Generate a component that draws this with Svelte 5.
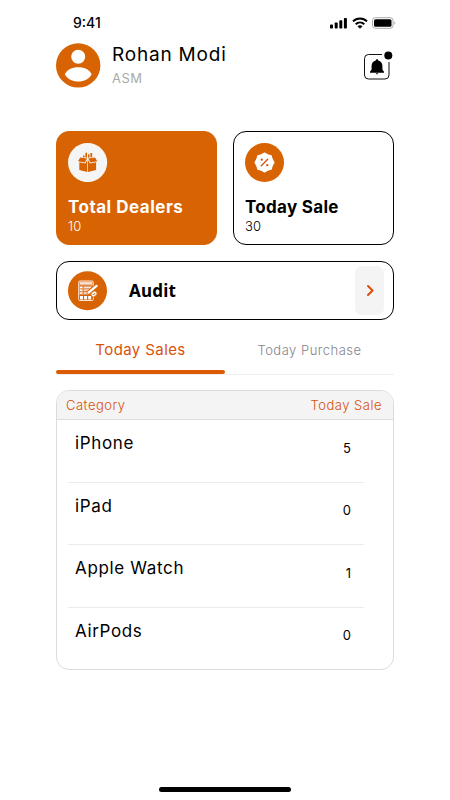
<script lang="ts">
	type Tab = 'sales' | 'purchase';

	let activeTab = $state<Tab>('sales');

	const rows = [
		{ name: 'iPhone', count: 5 },
		{ name: 'iPad', count: 0 },
		{ name: 'Apple Watch', count: 1 },
		{ name: 'AirPods', count: 0 }
	];
</script>

<div class="screen">
	<div class="status-bar">
		<span class="time">9:41</span>
		<div class="status-icons">
			<svg width="18" height="12" viewBox="0 0 18 12">
				<rect x="0" y="7.5" width="3" height="4" rx="0.8" />
				<rect x="4.7" y="5.5" width="3" height="6" rx="0.8" />
				<rect x="9.3" y="3.2" width="3" height="8.3" rx="0.8" />
				<rect x="13.9" y="1" width="3" height="10.5" rx="0.8" />
			</svg>
			<svg width="16" height="12" viewBox="0 0 16 12">
				<g fill="none" stroke="#000" stroke-width="2">
					<path d="M1 4.4C5 0.4 11 0.4 15 4.4" />
					<path d="M3.7 7.2C6.2 4.9 9.8 4.9 12.3 7.2" />
				</g>
				<path d="M5.5 9.2Q8 7.3 10.5 9.2L8 11.7Z" />
			</svg>
			<svg width="24" height="12" viewBox="0 0 24 12">
				<rect x="0.5" y="0.7" width="20.5" height="10.6" rx="2.8" fill="none" stroke="#aaa" />
				<rect x="2" y="2.2" width="17.5" height="7.6" rx="1.5" />
				<path d="M22.3 4.2Q24.5 6 22.3 7.8Z" fill="#aaa" />
			</svg>
		</div>
	</div>

	<header class="profile">
		<svg width="45" height="45" viewBox="0 0 45 45">
			<circle cx="22.2" cy="22.4" r="22.2" fill="#d86303" />
			<circle cx="22.2" cy="13.8" r="7" fill="#fff" />
			<path d="M8.8 31.2C11 26.7 16 24.2 22.3 24.2S33.5 26.7 35.7 31.2C33 36 28 38.5 22.3 38.5S11.5 36 8.8 31.2Z" fill="#fff" />
		</svg>
		<div class="who">
			<h1>Rohan Modi</h1>
			<span class="role">ASM</span>
		</div>
		<button class="bell" aria-label="Notifications">
			<svg width="30" height="30" viewBox="0 0 30 30">
				<path d="M18 4.5H4.5A4 4 0 0 0 .5 8.5V25A4 4 0 0 0 4.5 29H21A4 4 0 0 0 25 25V12" fill="none" stroke="#111" />
				<circle cx="24.3" cy="5.5" r="4" />
				<path d="M13 9.3C13.8 9.3 14.1 9.8 14.2 10.5C17 11.2 18.4 13.3 18.4 16V19.5L20 21.8V22.7H6V21.8L7.6 19.5V16C7.6 13.3 9 11.2 11.8 10.5C11.9 9.8 12.2 9.3 13 9.3Z" />
				<path d="M11.7 23.3H14.3Q13 25.5 11.7 23.3Z" />
			</svg>
		</button>
	</header>

	<div class="cards">
		<div class="card filled">
			<svg width="40" height="40" viewBox="0 0 40 40">
				<circle cx="19.6" cy="20.5" r="19.6" fill="#f5f5f5" />
				<g fill="#d86303">
					<path d="M12.2 15.6L19 16.6L16.8 20.6L10 19.2Z" />
					<path d="M27 15.6L20.3 16.6L22.5 20.6L29.3 19.2Z" />
					<path d="M11.3 20.2L17.3 21.5L19.3 18V30L11.3 28Z" />
					<path d="M28.1 20.2L22 21.5L20 18V30L28.1 28Z" />
					<path d="M15 13.5H16.6V15.5L15 15.2ZM17.4 11L19 10.6V15.8L17.4 15.5ZM20 12.5L21.5 12V15.5L20 15.8ZM22.4 11H24.2V15.2L22.4 15.5Z" />
				</g>
			</svg>
			<h2>Total Dealers</h2>
			<span class="value">10</span>
		</div>
		<div class="card sale">
			<svg width="40" height="40" viewBox="0 0 40 40">
				<circle cx="19.5" cy="20.5" r="19.5" fill="#d86303" />
				<path d="M19.5 11L22.6 12.8L26.2 13.8L27.2 17.4L29 20.5L27.2 23.6L26.2 27.2L22.6 28.2L19.5 30L16.4 28.2L12.8 27.2L11.8 23.6L10 20.5L11.8 17.4L12.8 13.8L16.4 12.8Z" fill="#fff" stroke="#fff" stroke-width="1.2" stroke-linejoin="round" />
				<path d="M16.3 23.7L22.7 17.3" stroke="#d84b03" stroke-width="1.3" stroke-linecap="round" />
				<circle cx="16.8" cy="17.7" r="1.1" fill="#d84b03" />
				<circle cx="22.3" cy="23.2" r="1.1" fill="#d84b03" />
			</svg>
			<h2>Today Sale</h2>
			<span class="value">30</span>
		</div>
	</div>

	<button class="audit">
		<svg width="40" height="40" viewBox="0 0 40 40">
			<circle cx="19.5" cy="19.8" r="19.5" fill="#d86303" />
			<rect x="10.7" y="10" width="14.6" height="19.5" rx="1.3" fill="#e38b48" stroke="#fbe4d5" />
			<rect x="12" y="11.2" width="12" height="2.3" fill="#fbe4d5" />
			<path d="M12 16.5H14.5M12 19.2H14.5M12 22H14.5" stroke="#fff" stroke-width="1.6" />
			<path d="M16 16.5H23M16 19.2H21M16 22H19" stroke="#fbe4d5" stroke-width="1.3" />
			<path d="M11.2 24H24.8V29H11.2Z" fill="#d86303" />
			<path d="M12 25H15V28.4H12ZM16.1 25H19.1V28.4H16.1ZM20.2 25H23.2V28.4H20.2Z" fill="#fff" />
			<path d="M19.5 22.5L29 14.3" stroke="#d86303" stroke-width="4" />
			<path d="M20.5 21.7L28.6 14.8" stroke="#fff" stroke-width="2.2" stroke-linecap="round" />
			<ellipse cx="26" cy="23" rx="3.3" ry="2.5" transform="rotate(-40 26 23)" fill="#fff" stroke="#d86303" stroke-width="0.7" />
			<path d="M24.7 23L25.7 24L27.2 22" fill="none" stroke="#d86303" stroke-width="0.9" />
		</svg>
		<span class="audit-label">Audit</span>
		<span class="chevron">
			<svg width="10" height="12" viewBox="0 0 10 12">
				<path d="M3 1L7.5 5.5L3 10" fill="none" stroke="#dc4a08" stroke-width="1.9" stroke-linecap="round" stroke-linejoin="round" />
			</svg>
		</span>
	</button>

	<div class="tabs">
		<button class:active={activeTab === 'sales'} onclick={() => (activeTab = 'sales')}>
			<span>Today Sales</span>
		</button>
		<button class:active={activeTab === 'purchase'} onclick={() => (activeTab = 'purchase')}>
			<span>Today Purchase</span>
		</button>
	</div>

	<section class="table">
		<div class="table-head">
			<span>Category</span>
			<span>Today Sale</span>
		</div>
		<div class="table-body">
			{#each rows as row}
				<div class="row">
					<span class="name">{row.name}</span>
					<span class="count">{row.count}</span>
				</div>
			{/each}
		</div>
	</section>

	<div class="home-indicator"></div>
</div>

<style>
	:global(body) {
		margin: 0;
		background: #fff;
	}

	.screen {
		display: flex;
		flex-direction: column;
		box-sizing: border-box;
		width: 450px;
		height: 800px;
		padding: 0 56px 8px;
		font-family: Inter, 'Liberation Sans', sans-serif;
		color: #000;
		overflow: hidden;
	}

	svg {
		display: block;
		flex: none;
	}

	button {
		padding: 0;
		border: none;
		background: none;
		font-family: inherit;
		color: inherit;
		cursor: pointer;
	}

	h1,
	h2 {
		margin: 0;
	}

	.status-bar {
		display: flex;
		justify-content: space-between;
		align-items: center;
		height: 17px;
		padding: 14px 0 0 17px;
		margin-right: -2px;
	}

	.time {
		font-size: 14px;
		font-weight: 500;
	}

	.status-icons {
		display: flex;
		gap: 4px;
	}

	.profile {
		display: flex;
		height: 44px;
		margin-top: 12px;
	}

	.who {
		display: flex;
		flex-direction: column;
		margin-left: 11px;
	}

	h1 {
		font-size: 19px;
		line-height: 23px;
		font-weight: 400;
		letter-spacing: 0.8px;
	}

	.role {
		margin-top: 3px;
		font-size: 13px;
		line-height: 18px;
		letter-spacing: 0.5px;
		color: #aaa;
	}

	.bell {
		align-self: flex-start;
		margin: 7px 0 0 auto;
	}

	.cards {
		display: grid;
		grid-template-columns: 1fr 1fr;
		gap: 16px;
		margin-top: 44px;
	}

	.card {
		box-sizing: border-box;
		height: 114px;
		padding: 10px 11px;
		border: 1px solid #000;
		border-radius: 13px;
	}

	.card.filled {
		border-color: #d86303;
		background: #d86303;
		color: #fff;
	}

	h2 {
		margin-top: 14px;
		font-size: 17px;
		line-height: 22px;
		font-weight: 700;
		letter-spacing: 0.5px;
	}

	.sale h2 {
		letter-spacing: 0.3px;
	}

	.value {
		display: block;
		font-size: 13px;
		line-height: 17px;
		font-weight: 300;
		letter-spacing: 0.2px;
	}

	.audit {
		display: flex;
		align-items: center;
		box-sizing: border-box;
		height: 59px;
		flex: none;
		margin-top: 16px;
		padding: 0 9px 0 11px;
		border: 1px solid #000;
		border-radius: 13px;
	}

	.audit-label {
		margin-left: 21px;
		font-family: 'Noto Sans', sans-serif;
		font-size: 17px;
		font-weight: 700;
		letter-spacing: 0.2px;
	}

	.chevron {
		display: flex;
		align-items: center;
		justify-content: center;
		width: 29px;
		height: 49px;
		margin-left: auto;
		border-radius: 7px;
		background: #f4f4f4;
	}

	.tabs {
		display: grid;
		grid-template-columns: 1fr 1fr;
		height: 55px;
		flex: none;
	}

	.tabs button {
		display: flex;
		flex-direction: column;
		align-items: center;
		position: relative;
		padding-top: 19px;
		border-bottom: 1px solid #eee;
		font-size: 13px;
		line-height: 22px;
		font-weight: 300;
		letter-spacing: 0.5px;
		color: #85858b;
	}

	.tabs button.active {
		font-size: 15px;
		font-weight: 400;
		letter-spacing: 0.4px;
		color: #d85309;
	}

	.tabs button.active::after {
		content: '';
		position: absolute;
		inset: auto 0 0;
		height: 4px;
		border-radius: 2px;
		background: #db5c05;
	}

	.table {
		box-sizing: border-box;
		height: 280px;
		flex: none;
		margin-top: 15px;
		border: 1px solid #dcdcdc;
		border-radius: 13px;
		overflow: hidden;
	}

	.table-head {
		display: flex;
		justify-content: space-between;
		align-items: center;
		height: 28px;
		padding: 0 11px 0 9px;
		border-bottom: 1px solid #dcdcdc;
		background: #f4f4f4;
		font-size: 13px;
		font-weight: 300;
		letter-spacing: 0.5px;
		color: #d8500b;
	}

	.table-body {
		padding: 0 29px 0 11px;
	}

	.row {
		display: flex;
		justify-content: space-between;
		box-sizing: border-box;
		height: 62.6px;
		padding: 11px 13px 0 7px;
		border-bottom: 1px solid #ebebeb;
	}

	.row:last-child {
		border-bottom: none;
	}

	.name {
		font-size: 17px;
		line-height: 24px;
		letter-spacing: 0.65px;
	}

	.count {
		margin-top: 6.5px;
		font-size: 13px;
		line-height: 20px;
	}

	.home-indicator {
		width: 132px;
		height: 5px;
		margin: auto auto 0;
		border-radius: 3px;
		background: #000;
	}
</style>
